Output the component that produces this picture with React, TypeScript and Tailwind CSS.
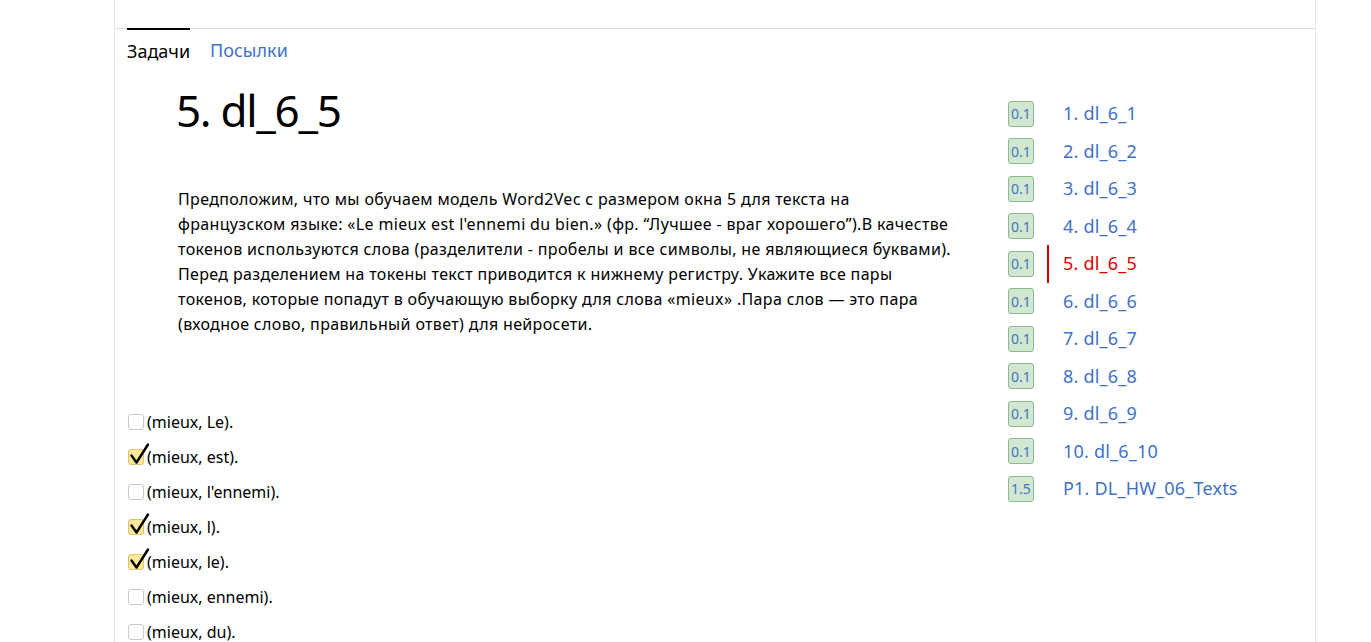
import React from "react";

const tasks = [
  { score: "0.1", name: "1. dl_6_1" },
  { score: "0.1", name: "2. dl_6_2" },
  { score: "0.1", name: "3. dl_6_3" },
  { score: "0.1", name: "4. dl_6_4" },
  { score: "0.1", name: "5. dl_6_5", active: true },
  { score: "0.1", name: "6. dl_6_6" },
  { score: "0.1", name: "7. dl_6_7" },
  { score: "0.1", name: "8. dl_6_8" },
  { score: "0.1", name: "9. dl_6_9" },
  { score: "0.1", name: "10. dl_6_10" },
  { score: "1.5", name: "P1. DL_HW_06_Texts" },
];

const options = [
  { label: "(mieux, Le).", checked: false },
  { label: "(mieux, est).", checked: true },
  { label: "(mieux, l'ennemi).", checked: false },
  { label: "(mieux, l).", checked: true },
  { label: "(mieux, le).", checked: true },
  { label: "(mieux, ennemi).", checked: false },
  { label: "(mieux, du).", checked: false },
];

function Checkbox({ checked }: { checked: boolean }) {
  return (
    <span
      className={
        "relative mr-[3px] inline-block h-[16px] w-[16px] shrink-0 rounded-[3px] border " +
        (checked ? "border-[#e0c36a] bg-[#fde99a]" : "border-[#c9c9c9] bg-white")
      }
    >
      {checked && (
        <svg
          className="absolute -top-[7px] left-[1px]"
          width="20"
          height="22"
          viewBox="0 0 20 22"
          fill="none"
        >
          <path
            d="M1.5 12.5 L6.5 19.5 L18 1.5"
            stroke="#000"
            strokeWidth="2.4"
            strokeLinecap="round"
            strokeLinejoin="round"
          />
        </svg>
      )}
    </span>
  );
}

export default function App() {
  return (
    <div className="h-[642px] w-full overflow-hidden bg-white font-['Noto_Sans',sans-serif] text-black">
      <div className="ml-[114px] h-full w-[1202px] border-x border-[#e6e6e6]">
        <div className="h-[29px] border-b border-[#dcdcdc]" />
        <div className="flex gap-[20px] pl-[12px] text-[18px]">
          <div className="-mt-px border-t-[2px] border-black pt-[6px] leading-[30px]">Задачи</div>
          <div className="pt-[6px] leading-[30px] text-[#3f72c5]">Посылки</div>
        </div>
        <div className="flex">
          <div className="w-[880px]">
            <h1 className="ml-[61px] mt-[17px] text-[44px] leading-[54px] tracking-[-1.3px]">5. dl_6_5</h1>
            <p className="ml-[63px] mt-[50px] text-[16px] leading-[25px] tracking-[0.35px]">
              Предположим, что мы обучаем модель Word2Vec с размером окна 5 для текста на
              <br />
              французском языке: «Le mieux est l'ennemi du bien.» (фр. “Лучшее - враг хорошего”).В качестве
              <br />
              токенов используются слова (разделители - пробелы и все символы, не являющиеся буквами).
              <br />
              Перед разделением на токены текст приводится к нижнему регистру. Укажите все пары
              <br />
              токенов, которые попадут в обучающую выборку для слова «mieux» .Пара слов — это пара
              <br />
              (входное слово, правильный ответ) для нейросети.
            </p>
            <div className="ml-[13px] mt-[67px] flex flex-col">
              {options.map((o) => (
                <label key={o.label} className="flex h-[35px] items-center text-[16px]">
                  <Checkbox checked={o.checked} />
                  <span>{o.label}</span>
                </label>
              ))}
            </div>
          </div>
          <div className="ml-[13px] mt-[29px] flex flex-col">
            {tasks.map((t) => (
              <div key={t.name} className="flex h-[37.5px] items-center">
                <span className="flex h-[26px] w-[26px] items-center justify-center rounded-[3px] border border-[#8dbb8d] bg-[#d1e7d1] text-[14px] text-[#4473c0]">
                  {t.score}
                </span>
                <span
                  className={
                    "ml-[13px] flex h-full items-center border-l-2 pl-[14px] text-[18px] tracking-[0.2px] " +
                    (t.active ? "border-[#d40000] text-[#e00000]" : "border-transparent text-[#3f72c5]")
                  }
                >
                  {t.name}
                </span>
              </div>
            ))}
          </div>
        </div>
      </div>
    </div>
  );
}
